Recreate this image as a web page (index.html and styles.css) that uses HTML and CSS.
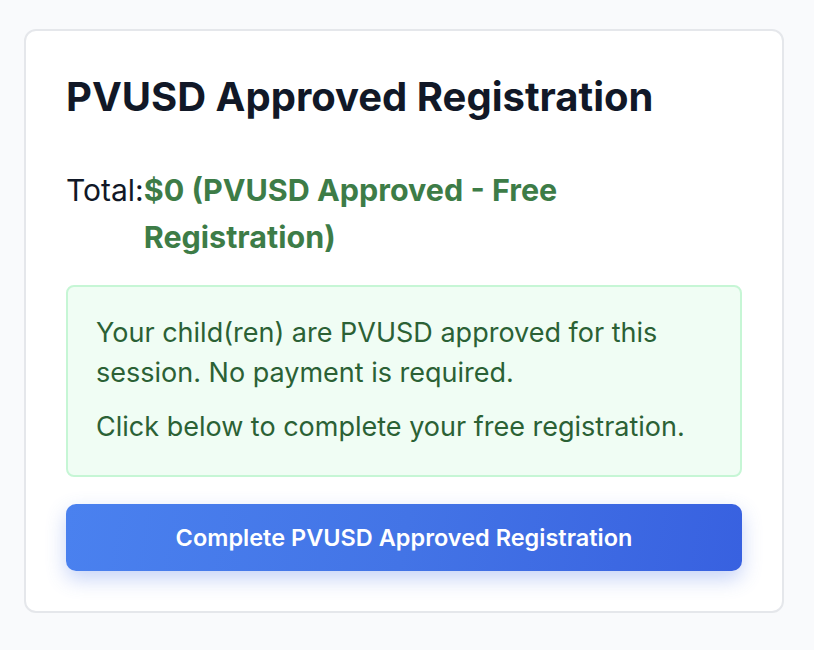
FILE: index.html
```html
<!DOCTYPE html>
<html lang="en">
<head>
<meta charset="utf-8">
<title>PVUSD Approved Registration</title>
<link rel="stylesheet" href="styles.css">
</head>
<body>
  <div class="card">
    <h1 class="title">PVUSD Approved Registration</h1>
    <div class="total">
      <span class="total-label">Total:</span>
      <span class="total-value">$0 (PVUSD Approved - Free Registration)</span>
    </div>
    <div class="notice">
      <p>Your child(ren) are PVUSD approved for this session. No payment is required.</p>
      <p>Click below to complete your free registration.</p>
    </div>
    <button class="submit" type="button">Complete PVUSD Approved Registration</button>
  </div>
</body>
</html>
```
FILE: styles.css
```css
* { box-sizing: border-box; }
html, body { margin: 0; padding: 0; }
body {
  background: #f9fafc;
  font-family: Inter, "Noto Sans", "Liberation Sans", sans-serif;
  padding: 29px 30px 0 24px;
}
.card {
  background: #ffffff;
  border: 2px solid #e5e7eb;
  border-radius: 12px;
  padding: 40px;
  width: 760px;
}
.title {
  margin: 0 0 44px;
  font-size: 40px;
  font-weight: 700;
  line-height: 51px;
  color: #111827;
}
.total {
  display: flex;
  align-items: baseline;
  line-height: 47px;
  margin-bottom: 25px;
}
.total-label { color: #111827; font-size: 30px; }
.total-value {
  color: #3d7c47;
  font-weight: 700;
  font-size: 30.5px;
  max-width: 470px;
}
.notice {
  background: #f0fdf4;
  border: 2px solid #c6f6d5;
  border-radius: 8px;
  padding: 26px 28px 28px;
  color: #2b6135;
  font-size: 27px;
  line-height: 40px;
}
.notice p { margin: 0; }
.notice p + p { margin-top: 14px; }
.submit {
  display: block;
  width: 100%;
  margin-top: 27px;
  height: 67px;
  border: 0;
  border-radius: 10px;
  background: linear-gradient(100deg, #4a81ef 0%, #4374e6 50%, #3861e0 100%);
  color: #ffffff;
  font-family: inherit;
  font-size: 23.5px;
  font-weight: 600;
  box-shadow: 0 8px 20px rgba(66, 110, 230, 0.3);
}
```
